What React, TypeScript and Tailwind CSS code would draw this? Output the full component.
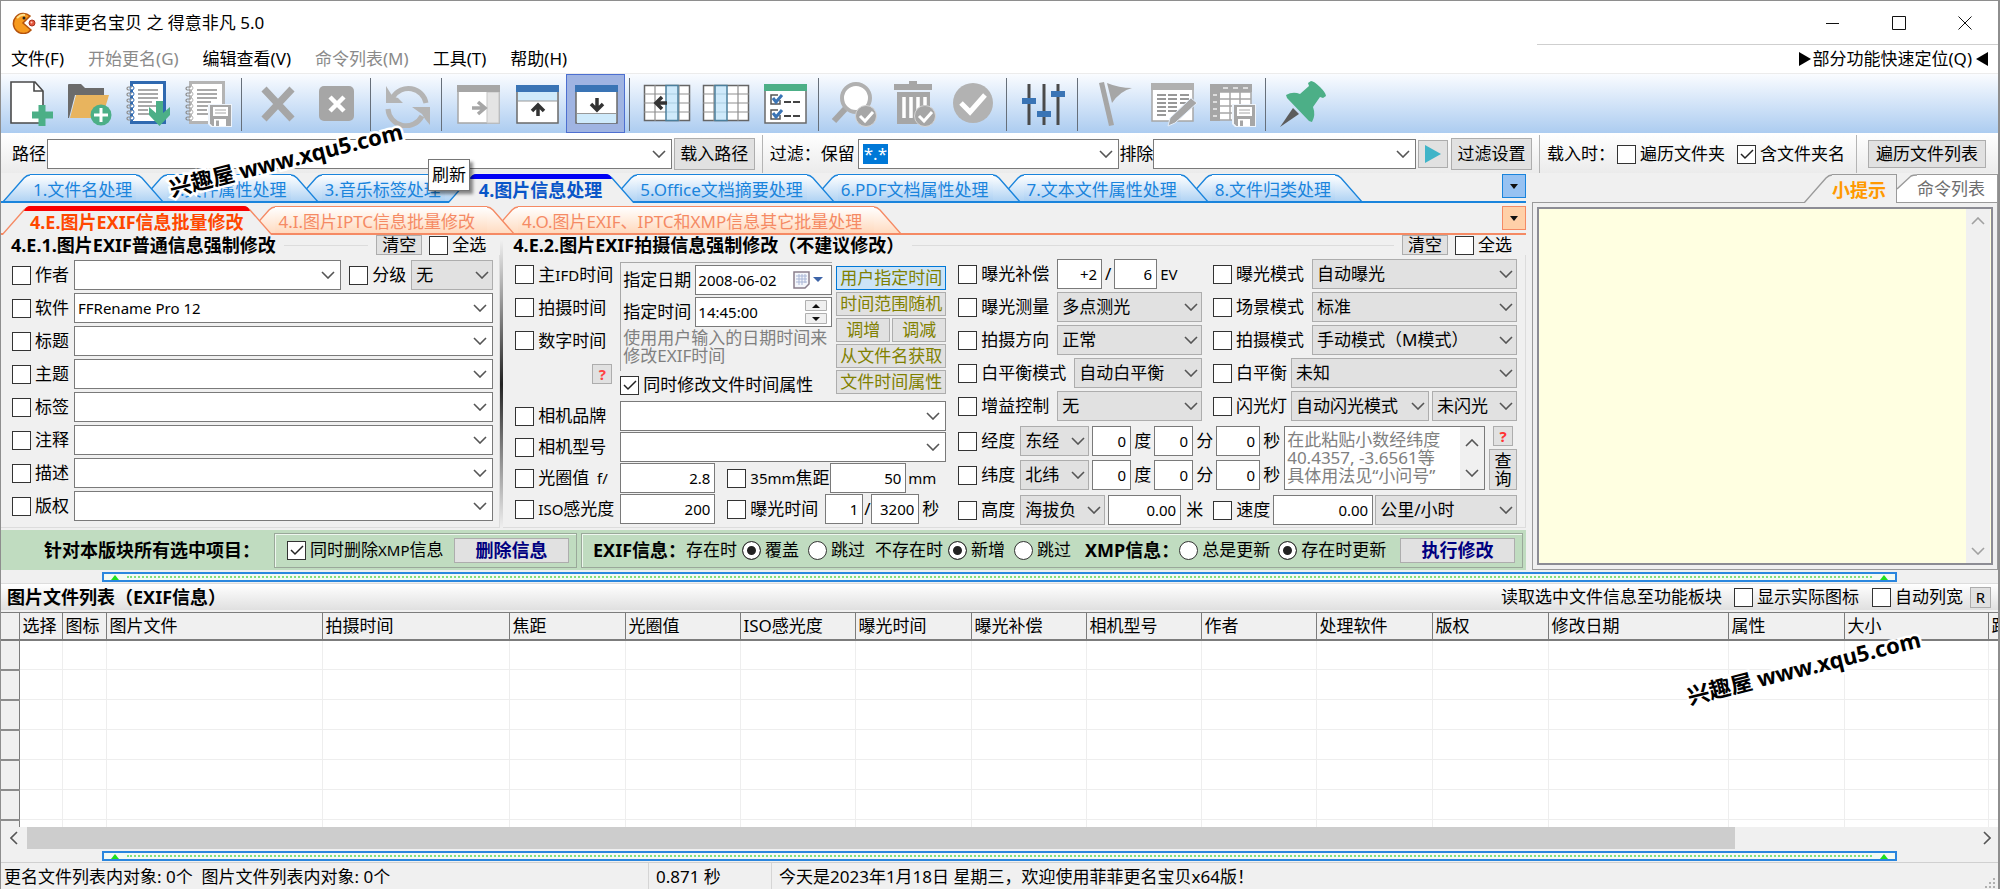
import { useId } from 'react';
import type { ReactNode } from 'react';
import clsx from 'clsx';

const GREEN = '#4caf87';
const GRAY = '#a6a6a6';
const DARK = '#4a4a4a';
const BLUE = '#3a74b5';

/* ---------- form controls ---------- */

function Chevron({ className }: { className?: string }) {
  return (
    <svg viewBox="0 0 14 8" className={clsx('pointer-events-none h-2 w-[14px] shrink-0', className)} fill="none" stroke="#555" strokeWidth="1.6">
      <path d="M1 1l6 6 6-6" />
    </svg>
  );
}

// Latin runs sit a little smaller than the Chinese text around them
function Mixed({ text }: { text: string }) {
  return (
    <span>
      {text.split(/([\x20-\x7e]+)/).map((part, i) => (i % 2 ? <span key={i} className="text-[15px]">{part}</span> : part))}
    </span>
  );
}

function Check({ label, checked, className }: { label: string; checked?: boolean; className?: string }) {
  return (
    <label className={clsx('flex shrink-0 items-center gap-1 whitespace-nowrap', className)}>
      <span className="grid shrink-0">
        <input
          type="checkbox"
          defaultChecked={checked}
          className="peer col-start-1 row-start-1 h-[19px] w-[19px] appearance-none border border-[#333] bg-white"
        />
        <svg viewBox="0 0 19 19" className="pointer-events-none col-start-1 row-start-1 hidden h-[19px] w-[19px] peer-checked:block" fill="none" stroke="#222" strokeWidth="1.5">
          <path d="M4 9l4 4 8-8" />
        </svg>
      </span>
      <Mixed text={label} />
    </label>
  );
}

function Radio({ name, label, checked, className }: { name: string; label: string; checked?: boolean; className?: string }) {
  return (
    <label className={clsx('flex shrink-0 items-center gap-1 whitespace-nowrap', className)}>
      <input
        type="radio"
        name={name}
        defaultChecked={checked}
        className="h-[19px] w-[19px] appearance-none rounded-full border border-[#333] bg-white checked:bg-[#222] checked:shadow-[inset_0_0_0_4px_#fff]"
      />
      {label}
    </label>
  );
}

function Select({ name, value, className }: { name: string; value: string; className?: string }) {
  return (
    <span className={clsx('grid h-[30px] min-w-0 items-center', className)}>
      <select aria-label={name} className="col-start-1 row-start-1 h-full w-full min-w-0 appearance-none border border-[#adadad] bg-[#e1e1e1] pl-1">
        <option>{value}</option>
      </select>
      <Chevron className="col-start-1 row-start-1 mr-1 justify-self-end" />
    </span>
  );
}

function Combo({ name, value, className, children }: { name: string; value?: string; className?: string; children?: ReactNode }) {
  return (
    <span className={clsx('flex h-[30px] min-w-0 items-center border border-[#7a7a7a] bg-white', className)}>
      {children}
      <input aria-label={name} defaultValue={value} className="h-full w-0 min-w-0 flex-1 px-[3px] text-[15px] outline-none" />
      <button type="button" aria-label={`${name} ▾`} className="flex h-full w-6 shrink-0 items-center justify-center">
        <Chevron />
      </button>
    </span>
  );
}

function Num({ name, value, className }: { name: string; value: string; className?: string }) {
  return (
    <input
      aria-label={name}
      defaultValue={value}
      className={clsx('h-[30px] shrink-0 border border-[#7a7a7a] bg-white px-1 text-right text-[15px]', className)}
    />
  );
}

function Btn({ children, className }: { children: ReactNode; className?: string }) {
  return (
    <button type="button" className={clsx('shrink-0 border border-[#adadad] bg-[#e1e1e1] text-center whitespace-nowrap', className)}>
      {children}
    </button>
  );
}

/* ---------- tab strips ---------- */

type Tone = 'blue' | 'orange' | 'plain';

const tones = {
  blue: {
    line: '#1a84dc',
    to: '#abd0f3',
    border: 'border-[#1a84dc]',
    fill: 'bg-linear-to-b from-white to-[#abd0f3]',
    text: 'text-[#1a84dc]',
    activeText: 'text-[#0a56c8]',
    bar: 'bg-[#0000f5]',
    pad: 'pl-[3px] pr-1',
    activePad: 'pl-[3px] pr-1',
  },
  orange: {
    line: '#f58a64',
    to: '#ffd9bd',
    border: 'border-[#f58a64]',
    fill: 'bg-linear-to-b from-white to-[#ffd9bd]',
    text: 'text-[#f58a64]',
    activeText: 'text-[#ff4800]',
    bar: 'bg-[#fa0000]',
    pad: 'pl-1 pr-3',
    activePad: '',
  },
  plain: {
    line: '#9a9a9a',
    to: '#ffffff',
    border: 'border-[#9a9a9a]',
    fill: 'bg-white',
    text: 'text-[#6e6e6e]',
    activeText: 'text-[#ff9900]',
    bar: '',
    pad: '',
    activePad: '',
  },
};

function Slope({ tone, active, flip }: { tone: Tone; active: boolean; flip?: boolean }) {
  const id = useId();
  const t = tones[tone];
  return (
    <svg viewBox="0 0 28 29" className={clsx('h-[29px] w-7 shrink-0', flip && '-scale-x-100')} fill="none">
      <defs>
        <linearGradient id={id} x1="0" y1="0" x2="0" y2="1">
          <stop offset="0" stopColor="#fff" />
          <stop offset="1" stopColor={t.to} />
        </linearGradient>
      </defs>
      <path d="M0 29L22 4Q25 1 28 1V29Z" fill={active ? '#f0f0f0' : `url(#${id})`} />
      <path d="M0 29L22 4Q25 1 28 1" stroke={t.line} strokeWidth="1.4" />
      {active && tone !== 'plain' && <path d="M22 5Q24 0 28 0V5Z" fill={tone === 'blue' ? '#0000f5' : '#fa0000'} />}
      {!active && tone !== 'plain' && <path d="M0 28H28" stroke={t.line} strokeWidth="2" />}
    </svg>
  );
}

function TabStrip({ tone, tabs, active }: { tone: Tone; tabs: string[]; active: number }) {
  const t = tones[tone];
  return (
    <div role="tablist" className={clsx('flex border-b-2 pt-px pl-px', t.border)}>
      {tabs.map((tab, i) => {
        const on = i === active;
        return (
          <button
            key={tab}
            type="button"
            role="tab"
            aria-selected={on}
            className={clsx('relative -mr-[25px] -mb-[2px] flex h-[29px] whitespace-nowrap', on ? t.activeText : t.text)}
            style={{ zIndex: on ? 20 : 10 - i }}
          >
            <Slope tone={tone} active={on} />
            <span className={clsx('flex h-full flex-col', on ? 'bg-[#f0f0f0] text-[18px] font-bold' : clsx('border-t border-b-2', t.border, t.fill))}>
              {on && <span className={clsx('h-[5px] shrink-0', t.bar)} />}
              <span className={clsx('leading-5', on ? clsx('pt-px', t.activePad) : clsx('pt-[5px]', t.pad))}>{tab}</span>
            </span>
            <Slope tone={tone} active={on} flip />
          </button>
        );
      })}
      <button
        type="button"
        aria-label="更多标签"
        className={clsx('ml-auto flex h-6 w-6 shrink-0 items-center justify-center border', t.border, tone === 'blue' ? 'bg-[#97c2f2]' : 'bg-[#ffd0a8]')}
      >
        <svg viewBox="0 0 8 5" className="h-[5px] w-2">
          <path d="M0 0h8L4 5z" fill="#111" />
        </svg>
      </button>
    </div>
  );
}

function Splitter() {
  return (
    <div className="mx-[101px] flex h-[10px] items-center gap-2 border-2 border-[#2a86de] bg-[#f3faf3] px-[7px]">
      <svg viewBox="0 0 8 5" className="h-[5px] w-2 shrink-0">
        <path d="M0 5h8L4 0z" fill="#1ee01e" />
      </svg>
      <span className="flex-1 border-t-2 border-dotted border-[#7fe07f]" />
      <svg viewBox="0 0 8 5" className="h-[5px] w-2 shrink-0">
        <path d="M0 5h8L4 0z" fill="#1ee01e" />
      </svg>
    </div>
  );
}

/* ---------- toolbar icons, all on a 48px grid ---------- */

const floppy = (
  <g>
    <path d="M24 24h24v23H27l-3-3z" fill="#eef4fb" />
    <path d="M26 25h21v21H28.500l-2.500-2.500z" fill={GRAY} />
    <path d="M29 27h15v9H29z" fill="#fff" />
    <path d="M31 30h11M31 33h11" stroke={GRAY} strokeWidth="1" />
    <path d="M30 39h12v7H30z" fill="#fff" />
    <path d="M32 40.500h3V46h-3z" fill={GRAY} />
  </g>
);

const badge = (
  <g>
    <circle cx="35" cy="36" r="10.500" fill={GRAY} stroke="#d4d4d4" strokeWidth="1" />
    <path d="M29 36l5 5 8-9" fill="none" stroke="#fff" strokeWidth="3" />
  </g>
);

function notebook(line: string) {
  return (
    <g>
      <rect x="6.500" y="2.500" width="33" height="40" fill="#fff" stroke={line} strokeWidth="3" />
      {[7, 13, 19, 25, 31, 37].map((y) => (
        <g key={y}>
          <circle cx="7" cy={y + 1} r="2" fill="#fff" stroke={line} strokeWidth="1" />
          <path d={`M7 ${y}H3.500a1.500 1.500 0 0 0 0 3H6`} fill="none" stroke="#8a8a8a" strokeWidth="1.200" />
        </g>
      ))}
      <path d="M13 10h20M13 14h20M13 18h20M13 22h14M13 26h18M13 30h10M13 34h14" stroke="#8d8d8d" strokeWidth="1.500" />
    </g>
  );
}

function grid(col: number) {
  return (
    <g fill="none">
      <rect x="1.500" y="5.500" width="45" height="35" fill="#fff" stroke="#666" strokeWidth="1.500" />
      <path d="M1 14h46M1 23h46M1 32h46M12 5v36M24 5v36M36 5v36" stroke="#8f8f8f" strokeWidth="1.200" />
      <rect x={col} y="5.500" width="12" height="35" fill="#cfeafb" stroke="#4b7f9c" strokeWidth="1.500" />
      <path d={`M${col + 1} 14h10M${col + 1} 23h10M${col + 1} 32h10`} stroke="#aacde0" />
    </g>
  );
}

const icons: Record<string, ReactNode> = {
  添加文件: (
    <g fill="none">
      <path d="M4 2h24l8 9v32H4z" fill="#fff" stroke={DARK} strokeWidth="1.600" />
      <path d="M27 2v9h9" stroke={DARK} strokeWidth="1.600" />
      <path d="M35 25v21M25 35h21" stroke={GREEN} strokeWidth="7" />
    </g>
  ),
  添加文件夹: (
    <g>
      <path d="M2 5q0-1 1-1h12l4 4h19v7H9L3 38H2z" fill="#6b6b6b" />
      <path d="M10 15h33l-7 23H4z" fill="#e8b45e" />
      <circle cx="35" cy="35" r="10.500" fill={GREEN} />
      <path d="M35 28v14M28 35h14" stroke="#fff" strokeWidth="3" />
    </g>
  ),
  导入列表: (
    <g>
      {notebook('#2f69b0')}
      <path d="M31 21h7v12l7-6v8L34.500 46 24 35v-8l7 6z" fill={GREEN} />
    </g>
  ),
  保存列表: (
    <g>
      {notebook('#b4b4b4')}
      {floppy}
    </g>
  ),
  移除: <path d="M10 9l28 30M38 9L10 39" stroke={GRAY} strokeWidth="7" />,
  清空列表: (
    <g>
      <rect x="6" y="6" width="35" height="35" rx="5" fill={GRAY} />
      <path d="M17 17l14 14M31 17L17 31" stroke="#fff" strokeWidth="4.500" />
    </g>
  ),
  刷新: (
    <g fill="none" stroke="#b4b4b4" strokeWidth="5">
      <path d="M9 17A18 18 0 0 1 42 23" />
      <path d="M4 29A18 18 0 0 0 38 36" />
      <path d="M2 6v17h17l-5-5-4-1-3-3z" fill="#b4b4b4" stroke="none" />
      <path d="M46 45V27H28l7 5 3 2 3 5z" fill="#b4b4b4" stroke="none" />
    </g>
  ),
  侧栏: (
    <g>
      <path d="M4 6h41v37H4z" fill="#fff" stroke={GRAY} strokeWidth="1.500" />
      <path d="M33 12h12v31H33z" fill="#e4e4e4" stroke="#c5c5c5" />
      <path d="M3 5h43v7H3z" fill={GRAY} />
      <path d="M18 28h12M24 22l7 6-7 6" fill="none" stroke={GRAY} strokeWidth="3.500" />
    </g>
  ),
  上栏: (
    <g>
      <path d="M4 6h41v37H4z" fill="#fff" stroke="#6a6a6a" strokeWidth="1.500" />
      <path d="M5 12h39v9H5z" fill="#cfeafb" />
      <path d="M5 21h39" stroke="#999" />
      <path d="M3 5h43v7H3z" fill={BLUE} />
      <path d="M25 36V25M19 31l6-6 6 6" fill="none" stroke="#333" strokeWidth="3.500" />
    </g>
  ),
  下栏: (
    <g>
      <path d="M4 6h41v37H4z" fill="#fff" stroke="#6a6a6a" strokeWidth="1.500" />
      <path d="M5 34h39v9H5z" fill="#cfeafb" />
      <path d="M5 33.500h39" stroke="#999" />
      <path d="M3 5h43v7H3z" fill={BLUE} />
      <path d="M25 18v11M19 24l6 6 6-6" fill="none" stroke="#333" strokeWidth="3.500" />
    </g>
  ),
  插入列: (
    <g>
      {grid(23)}
      <path d="M24 23H14M19 17l-6 6 6 6" fill="none" stroke="#333" strokeWidth="3.500" />
    </g>
  ),
  显示列: grid(13),
  选项: (
    <g fill="none">
      <path d="M4 5h41v38H4z" fill="#fff" stroke="#6a6a6a" strokeWidth="1.500" />
      <path d="M3 4h43v7H3z" fill={GREEN} />
      <path d="M17 15H10v9h9v-4M17 30H10v9h9v-4" stroke="#555" strokeWidth="1.500" />
      <path d="M12 18l3 4 6-7M12 33l3 4 6-7" stroke={BLUE} strokeWidth="3" />
      <path d="M23 22h7M32 22h7M23 36h7M32 36h7" stroke="#444" strokeWidth="2" />
    </g>
  ),
  预览: (
    <g>
      <path d="M15 28L3 41" stroke={GRAY} strokeWidth="6" />
      <circle cx="25" cy="18" r="14" fill="#fff" stroke="#b0b0b0" strokeWidth="4" />
      {badge}
    </g>
  ),
  删除选中: (
    <g>
      <path d="M4 4h15V1h8v3h15v6H4zM7 12h33v32H7z" fill={GRAY} />
      <path d="M14 17v21M21 17v21M28 17v21M35 17v8" stroke="#fff" strokeWidth="3.500" />
      {badge}
    </g>
  ),
  执行: (
    <g>
      <circle cx="24" cy="23" r="20" fill="#b2b2b2" />
      <path d="M12 23l9 9 15-17" fill="none" stroke="#fff" strokeWidth="5" />
    </g>
  ),
  设置: (
    <g stroke={DARK} strokeWidth="3">
      <path d="M9 4v41M24 4v41M38 4v41" />
      <path d="M2 21h14M17 34h14M31 14h14" stroke={BLUE} strokeWidth="6" />
    </g>
  ),
  标记: (
    <g fill={GRAY}>
      <path d="M9 3l5-1 10 43-5 1z" />
      <path d="M17 3q12 5 25 5-12 3-20 15z" />
    </g>
  ),
  编辑列表: (
    <g>
      <path d="M3 4h41v37H3z" fill="#fff" stroke={GRAY} strokeWidth="1.500" />
      <path d="M2 3h43v7H2z" fill="#b0b0b0" />
      <path d="M8 15h9M19 15h9M31 15h9M8 19h9M19 19h9M31 19h9M8 23h9M19 23h9M31 23h9M8 27h9M19 27h9M8 31h9M19 31h9M8 35h9" stroke="#777" strokeWidth="1.600" />
      <path d="M42 18l6 5-22 20-7 3 2-8z" fill={GRAY} stroke="#e4eefa" strokeWidth="1" />
    </g>
  ),
  导出表格: (
    <g>
      <path d="M3 5h40v35H3z" fill="#fff" stroke={GRAY} strokeWidth="1.500" />
      <path d="M2 4h42v8H12v29H2z" fill={GRAY} />
      <path d="M12 12h31M12 19h31M12 26h31M12 33h31M22 12v28M32 12v28" stroke={GRAY} strokeWidth="1.500" />
      <path d="M15 8h5M25 8h5M35 8h5M5 15h4M5 22h4M5 29h4M5 36h4" stroke="#ddd" strokeWidth="2" />
      {floppy}
    </g>
  ),
  置顶: (
    <g>
      <path d="M14 28l6 6L1 47z" fill="#5c5c5c" />
      <path d="M32 1q3 0 9 6t6 9l-3 2-3-1-7 10q3 8-1 15l-3-1L8 18l-1-3q7-4 14-1l9-8-1-3z" fill={GREEN} />
    </g>
  ),
};

const toolGroups = [
  ['添加文件', '添加文件夹', '导入列表', '保存列表'],
  ['移除', '清空列表'],
  ['刷新'],
  ['侧栏', '上栏', '下栏'],
  ['插入列', '显示列', '选项'],
  ['预览', '删除选中', '执行'],
  ['设置'],
  ['标记', '编辑列表', '导出表格'],
  ['置顶'],
];

const menus = [
  { text: '文件(F)' },
  { text: '开始更名(G)', off: true },
  { text: '编辑查看(V)' },
  { text: '命令列表(M)', off: true },
  { text: '工具(T)' },
  { text: '帮助(H)' },
];

const fileTabs = ['1.文件名处理', '2.文件属性处理', '3.音乐标签处理', '4.图片信息处理', '5.Office文档摘要处理', '6.PDF文档属性处理', '7.文本文件属性处理', '8.文件归类处理'];
const exifTabs = ['4.E.图片EXIF信息批量修改', '4.I.图片IPTC信息批量修改', '4.O.图片EXIF、IPTC和XMP信息其它批量处理'];

const columns: [string, number][] = [
  ['', 18],
  ['选择', 43],
  ['图标', 44],
  ['图片文件', 216],
  ['拍摄时间', 187],
  ['焦距', 116],
  ['光圈值', 115],
  ['ISO感光度', 115],
  ['曝光时间', 116],
  ['曝光补偿', 115],
  ['相机型号', 115],
  ['作者', 115],
  ['处理软件', 116],
  ['版权', 116],
  ['修改日期', 180],
  ['属性', 116],
  ['大小', 144],
  ['路径', 14],
];

/* ---------- page sections ---------- */

function TitleBar() {
  return (
    <header className="bg-white">
      <div className="flex h-[43px] items-center pl-[11px]">
        <svg viewBox="0 0 24 22" className="h-[22px] w-6 shrink-0">
          <path d="M18 4A10 10 0 1 0 19 18l-8-7z" fill="#f79a1e" stroke="#b5530c" strokeWidth="1.500" />
          <path d="M5 6q4-4 8-3" stroke="#ffe08a" strokeWidth="2" fill="none" />
          <circle cx="12" cy="6" r="1.500" fill="#222" />
          <circle cx="20" cy="11" r="3" fill="#e2553d" stroke="#a8321f" />
          <circle cx="19.500" cy="10.500" r="1" fill="#ffd0c0" />
        </svg>
        <h1 className="ml-1 flex-1">菲菲更名宝贝 之 得意非凡 5.0</h1>
        <div className="flex">
          <button type="button" aria-label="最小化" className="flex h-10 w-[66px] items-center justify-center">
            <svg viewBox="0 0 14 14" className="h-[14px] w-[14px]" stroke="#111" fill="none">
              <path d="M0 7.500h13" />
            </svg>
          </button>
          <button type="button" aria-label="最大化" className="flex h-10 w-[66px] items-center justify-center">
            <svg viewBox="0 0 14 14" className="h-[14px] w-[14px]" stroke="#111" fill="none">
              <path d="M.5.5h13v13H.5z" />
            </svg>
          </button>
          <button type="button" aria-label="关闭" className="flex h-10 w-[66px] items-center justify-center">
            <svg viewBox="0 0 14 14" className="h-[14px] w-[14px]" stroke="#111" fill="none">
              <path d="M.5.5l13 13M13.500.5l-13 13" />
            </svg>
          </button>
        </div>
      </div>
      <nav className="flex h-[29px] pl-[10px]">
        {menus.map((m) => (
          <button key={m.text} type="button" disabled={m.off} className="mr-6 disabled:text-[#8a8a8a]">
            {m.text}
          </button>
        ))}
        <div className="ml-auto flex w-[461px] justify-end border-t border-[#cfcfcf] pr-[10px]">
          <button type="button" className="flex items-center">
            <svg viewBox="0 0 12 14" className="mr-[2px] h-[14px] w-3">
              <path d="M0 0l12 7-12 7z" />
            </svg>
            部分功能快速定位(Q)
            <svg viewBox="0 0 12 14" className="ml-1 h-[14px] w-3">
              <path d="M12 0L0 7l12 7z" />
            </svg>
          </button>
        </div>
      </nav>
    </header>
  );
}

function Toolbar() {
  return (
    <div role="toolbar" className="flex h-[60px] border-t border-[#ececec] bg-linear-to-b from-[#fafcff] to-[#acccf0]">
      {toolGroups.map((group, i) => (
        <div key={group[0]} className="flex">
          {i > 0 && <span className={clsx('mt-1 ml-1 h-[53px] w-px bg-[#666f7a]', i % 2 ? 'mr-[6px]' : 'mr-[7px]')} />}
          {group.map((name) => (
            <button
              key={name}
              type="button"
              aria-label={name}
              className={clsx('flex h-[59px] w-[59px] items-center justify-center', name === '下栏' && 'border border-[#4d6fd0] bg-[#a0b4e2]')}
            >
              <svg viewBox="0 0 48 48" className="h-12 w-12 shrink-0">
                {icons[name]}
              </svg>
            </button>
          ))}
        </div>
      ))}
    </div>
  );
}

function PathBar() {
  return (
    <div className="flex h-10 items-center bg-linear-to-b from-white to-[#ebebeb] pt-[2px] pl-[11px] whitespace-nowrap">
      <span className="w-[35px]">路径</span>
      <Combo name="路径" className="flex-[626]" />
      <Btn className="ml-[2px] h-8 w-[81px]">载入路径</Btn>
      <span className="mx-[7px] h-full w-px bg-[#b4b4b4]" />
      <span className="w-[88px]">过滤：保留</span>
      <Combo name="保留" className="flex-[261]">
        <span className="ml-1 bg-[#0078d7] px-px text-white">*.*</span>
      </Combo>
      <span>排除</span>
      <Combo name="排除" className="flex-[262]" />
      <Btn className="ml-[2px] flex h-7 w-[30px] items-center justify-center">
        <svg viewBox="0 0 16 18" className="h-[18px] w-4" aria-label="应用过滤">
          <path d="M0 0l16 9-16 9z" fill="#3fb4c8" />
        </svg>
      </Btn>
      <Btn className="ml-[3px] h-8 w-[81px]">过滤设置</Btn>
      <span className="mx-[7px] h-full w-px bg-[#b4b4b4]" />
      <span className="w-[70px]">载入时：</span>
      <Check label="遍历文件夹" />
      <Check label="含文件夹名" checked className="ml-3" />
      <span className="mx-[11px] h-full w-px bg-[#b4b4b4]" />
      <Btn className="mr-[12px] h-7 w-[118px]">遍历文件列表</Btn>
    </div>
  );
}

function GroupHead({ title }: { title: string }) {
  return (
    <div className="flex h-5 items-center pr-[6px] pl-[10px] whitespace-nowrap">
      <h2 className="text-[18px] leading-5 font-bold">{title}</h2>
      <span className="mx-2 h-px flex-1 bg-[#dcdcdc]" />
      <Btn className="h-5 w-[46px] leading-[18px]">清空</Btn>
      <Check label="全选" className="ml-[7px] pr-2" />
    </div>
  );
}

function BasicInfo() {
  return (
    <section>
      <GroupHead title="4.E.1.图片EXIF普通信息强制修改" />
      <div className="grid gap-[3px] border-r border-b border-[#dcdcdc] pt-[5px] pr-[6px] pb-[6px] pl-[11px]">
        <div className="flex items-center">
          <Check label="作者" className="w-[62px]" />
          <Combo name="作者" className="flex-1" />
          <Check label="分级" className="mr-[5px] ml-2" />
          <Select name="分级" value="无" className="w-[82px]" />
        </div>
        {['软件', '标题', '主题', '标签', '注释', '描述', '版权'].map((label) => (
          <div key={label} className="flex items-center">
            <Check label={label} className="w-[62px]" />
            <Combo name={label} value={label === '软件' ? 'FFRename Pro 12' : ''} className="flex-1" />
          </div>
        ))}
      </div>
    </section>
  );
}

function TimeBlock() {
  return (
    <div className="flex h-[138px] pt-[3px]">
      <div className="flex w-[105px] shrink-0 flex-col gap-[14px] pt-[3px]">
        <Check label="主IFD时间" className="h-[19px]" />
        <Check label="拍摄时间" className="h-[19px]" />
        <Check label="数字时间" className="h-[19px]" />
        <Btn className="mr-2 h-5 w-5 self-end text-[15px] leading-[18px] font-bold text-[#f44]">?</Btn>
      </div>
      <div className="min-w-0 flex-1">
        <div className="h-[109px] border-t border-l border-[#a8a8a8] pt-[2px] pl-[2px]">
          <label className="flex items-center whitespace-nowrap">
            <span className="w-[72px] shrink-0">指定日期</span>
            <span className="flex h-[30px] flex-1 items-center border border-[#7a7a7a] bg-white">
              <input defaultValue="2008-06-02" className="w-0 flex-1 pl-[2px] text-[15px]" />
              <svg viewBox="0 0 30 20" className="mr-2 h-5 w-[30px]">
                <path d="M1 2h15v12l-4 4H1z" fill="#f4f6fb" stroke="#8a7f8c" strokeWidth="1.500" />
                <path d="M3 6h11M3 9h11M3 12h11M6 4v11M9 4v11M12 4v9" stroke="#a9b6d6" />
                <path d="M20 7h10l-5 5z" fill="#3d64a8" />
              </svg>
            </span>
          </label>
          <label className="mt-[2px] flex items-center whitespace-nowrap">
            <span className="w-[72px] shrink-0">指定时间</span>
            <span className="flex h-[30px] flex-1 items-center border border-[#7a7a7a] bg-white">
              <input defaultValue="14:45:00" className="w-0 flex-1 pl-[2px] text-[15px]" />
              <svg viewBox="0 0 22 24" className="mr-1 h-6 w-[22px]">
                <path d="M.5.5h21v10H.5zM.5 13.500h21v10H.5z" fill="#f0f0f0" stroke="#b0b0b0" />
                <path d="M7 8h8l-4-4zM7 17h8l-4 4z" fill="#111" />
              </svg>
            </span>
          </label>
          <p className="mt-[2px] leading-[18px] whitespace-nowrap text-[#808080]">
            使用用户输入的日期时间来
            <br />
            修改EXIF时间
          </p>
        </div>
        <Check label="同时修改文件时间属性" checked className="mt-[4px]" />
      </div>
      <div className="ml-1 grid w-[110px] shrink-0 grid-cols-2 content-start gap-[2px] pt-1 text-[#808000]">
        <Btn className="col-span-2 h-6 !border-[#0078d7] !bg-[#cce4f7] leading-[22px]">用户指定时间</Btn>
        <Btn className="col-span-2 h-6 leading-[22px]">时间范围随机</Btn>
        <Btn className="h-6 leading-[22px]">调增</Btn>
        <Btn className="h-6 leading-[22px]">调减</Btn>
        <Btn className="col-span-2 h-6 leading-[22px]">从文件名获取</Btn>
        <Btn className="col-span-2 h-6 leading-[22px]">文件时间属性</Btn>
      </div>
    </div>
  );
}

function Coordinate({ label, value }: { label: string; value: string }) {
  return (
    <div className="flex h-[30px] items-center whitespace-nowrap">
      <Check label={label} className="w-[62px]" />
      <Select name={label} value={value} className="mr-[3px] w-[69px]" />
      <Num name={`${label}度`} value="0" className="w-[39px]" />
      <span className="mx-[3px]">度</span>
      <Num name={`${label}分`} value="0" className="w-[39px]" />
      <span className="mx-[3px]">分</span>
      <Num name={`${label}秒`} value="0" className="w-[44px]" />
      <span className="mx-[3px]">秒</span>
    </div>
  );
}

function ShootingInfo() {
  return (
    <section>
      <GroupHead title="4.E.2.图片EXIF拍摄信息强制修改（不建议修改）" />
      <div className="grid grid-cols-[431fr_559fr] gap-3 border-r border-b border-[#dcdcdc] pt-1 pr-2 pb-[2px] pl-3">
        <div className="flex min-w-0 flex-col">
          <TimeBlock />
          <div className="mt-[4px] grid gap-px whitespace-nowrap">
            <div className="flex items-center">
              <Check label="相机品牌" className="w-[105px]" />
              <Combo name="相机品牌" className="flex-1" />
            </div>
            <div className="flex items-center">
              <Check label="相机型号" className="w-[105px]" />
              <Combo name="相机型号" className="flex-1" />
            </div>
            <div className="flex items-center">
              <Check label="光圈值  f/" className="w-[105px] whitespace-pre" />
              <Num name="光圈值" value="2.8" className="w-[95px]" />
              <Check label="35mm焦距" className="ml-3 w-[103px]" />
              <Num name="35mm焦距" value="50" className="w-[76px]" />
              <span className="ml-[2px] text-[15px]">mm</span>
            </div>
            <div className="flex items-center">
              <Check label="ISO感光度" className="w-[105px]" />
              <Num name="ISO感光度" value="200" className="w-[95px]" />
              <Check label="曝光时间" className="ml-3 w-[98px]" />
              <Num name="曝光时间分子" value="1" className="w-[38px]" />
              <span className="w-2 text-center">/</span>
              <Num name="曝光时间分母" value="3200" className="w-[48px]" />
              <span className="ml-[3px]">秒</span>
            </div>
          </div>
        </div>

        <div className="flex min-w-0 flex-col">
          <div className="grid grid-cols-[244fr_304fr] gap-x-[11px] whitespace-nowrap">
            <div className="grid min-w-0 gap-[3px]">
              <div className="flex items-center">
                <Check label="曝光补偿" className="w-[99px]" />
                <Num name="曝光补偿分子" value="+2" className="w-[45px]" />
                <span className="w-3 text-center">/</span>
                <Num name="曝光补偿分母" value="6" className="w-[43px]" />
                <span className="ml-[3px] text-[15px]">EV</span>
              </div>
              <div className="flex items-center">
                <Check label="曝光测量" className="w-[99px]" />
                <Select name="曝光测量" value="多点测光" className="flex-1" />
              </div>
              <div className="flex items-center">
                <Check label="拍摄方向" className="w-[99px]" />
                <Select name="拍摄方向" value="正常" className="flex-1" />
              </div>
              <div className="flex items-center">
                <Check label="白平衡模式" className="w-[116px]" />
                <Select name="白平衡模式" value="自动白平衡" className="flex-1" />
              </div>
              <div className="flex items-center">
                <Check label="增益控制" className="w-[99px]" />
                <Select name="增益控制" value="无" className="flex-1" />
              </div>
            </div>
            <div className="grid min-w-0 gap-[3px]">
              <div className="flex items-center">
                <Check label="曝光模式" className="w-[99px]" />
                <Select name="曝光模式" value="自动曝光" className="flex-1" />
              </div>
              <div className="flex items-center">
                <Check label="场景模式" className="w-[99px]" />
                <Select name="场景模式" value="标准" className="flex-1" />
              </div>
              <div className="flex items-center">
                <Check label="拍摄模式" className="w-[99px]" />
                <Select name="拍摄模式" value="手动模式（M模式）" className="flex-1" />
              </div>
              <div className="flex items-center">
                <Check label="白平衡" className="w-[78px]" />
                <Select name="白平衡" value="未知" className="flex-1" />
              </div>
              <div className="flex items-center">
                <Check label="闪光灯" className="w-[78px]" />
                <Select name="闪光灯" value="自动闪光模式" className="flex-1" />
                <Select name="闪光状态" value="未闪光" className="ml-[3px] w-[85px]" />
              </div>
            </div>
          </div>

          <div className="mt-[5px] flex">
            <div className="grid shrink-0 gap-[4px]">
              <Coordinate label="经度" value="东经" />
              <Coordinate label="纬度" value="北纬" />
            </div>
            <div className="ml-[1px] flex h-16 min-w-0 flex-1 border border-[#7a7a7a] bg-white">
              <textarea
                aria-label="经纬度"
                className="h-full w-0 flex-1 resize-none overflow-hidden pt-1 pl-[2px] leading-[18px] whitespace-pre text-[#808080] placeholder:text-[#808080]"
                placeholder={'在此粘贴小数经纬度\n40.4357, -3.6561等\n具体用法见“小问号”'}
              />
              <span className="flex w-6 flex-col items-center justify-between bg-[#f0f0f0] py-3">
                <Chevron className="rotate-180" />
                <Chevron />
              </span>
            </div>
            <div className="ml-1 flex w-[28px] shrink-0 flex-col items-center gap-[3px]">
              <Btn className="h-5 w-5 text-[15px] leading-[18px] font-bold text-[#f33]">?</Btn>
              <Btn className="h-[41px] w-full px-1 leading-[18px] !whitespace-normal">查询</Btn>
            </div>
          </div>

          <div className="mt-[5px] flex items-center whitespace-nowrap">
            <Check label="高度" className="w-[62px]" />
            <Select name="高度" value="海拔负" className="mr-[3px] w-[85px]" />
            <Num name="高度米" value="0.00" className="w-[73px]" />
            <span className="mx-[5px]">米</span>
            <Check label="速度" className="ml-[5px] w-[60px]" />
            <Num name="速度" value="0.00" className="w-[100px]" />
            <Select name="速度单位" value="公里/小时" className="ml-[2px] flex-1" />
          </div>
        </div>
      </div>
    </section>
  );
}

function ActionBar() {
  const box = 'flex h-[35px] items-center border border-[#9aa89a] shadow-[inset_1px_1px_0_#eef7ee]';
  return (
    <div className="mt-[2px] flex h-10 items-center bg-[#c0dcc0] pr-[3px] whitespace-nowrap">
      <span className="w-[273px] shrink-0 pl-[43px] text-[18px] font-bold">针对本版块所有选中项目：</span>
      <div className={clsx(box, 'w-[303px] shrink-0 pl-3')}>
        <Check label="同时删除XMP信息" checked />
        <Btn className="mr-[7px] ml-auto h-[25px] w-[115px] text-[18px] leading-[22px] font-bold text-[#000080]">删除信息</Btn>
      </div>
      <div className={clsx(box, 'ml-1 flex-1 pl-[11px]')}>
        <span className="text-[18px] font-bold">EXIF信息：</span>
        <span className="mr-[5px]">存在时</span>
        <Radio name="exist" label="覆盖" checked />
        <Radio name="exist" label="跳过" className="ml-[9px]" />
        <span className="mr-[5px] ml-[10px]">不存在时</span>
        <Radio name="missing" label="新增" checked />
        <Radio name="missing" label="跳过" className="ml-[9px]" />
        <span className="ml-[14px] text-[18px] font-bold">XMP信息：</span>
        <Radio name="xmp" label="总是更新" />
        <Radio name="xmp" label="存在时更新" checked className="ml-2" />
        <Btn className="mr-[7px] ml-auto h-[25px] w-[115px] text-[18px] leading-[22px] font-bold text-[#000080]">执行修改</Btn>
      </div>
    </div>
  );
}

function TipsPanel() {
  return (
    <aside className="ml-[6px] flex w-[466px] shrink-0 flex-col">
      <div role="tablist" className="flex h-[30px] justify-end pt-px">
        <span className="flex-1 border-b border-[#9a9a9a]" />
        <button type="button" role="tab" aria-selected="true" className="flex text-[18px] leading-[30px] font-bold text-[#ff9900]">
          <Slope tone="plain" active />
          <span className="h-full border-t border-r border-[#9a9a9a] pr-[10px]">小提示</span>
        </button>
        <button type="button" role="tab" aria-selected="false" className="flex border-b border-[#9a9a9a] leading-[28px] text-[#6e6e6e]">
          <svg viewBox="0 0 20 28" className="h-7 w-5" fill="none">
            <path d="M0 15L14 2Q16 1 20 1V28H0z" fill="#fff" />
            <path d="M0 15L14 2Q16 1 20 1" stroke="#9a9a9a" strokeWidth="1.400" />
          </svg>
          <span className="h-full border-t border-r border-[#9a9a9a] bg-white pr-3">命令列表</span>
        </button>
      </div>
      <div className="flex flex-1 border-x border-b border-[#9a9a9a] p-1">
        <div className="flex flex-1 border-2 border-[#8c8c94] bg-[#ffffe1]">
          <textarea aria-label="小提示" className="w-0 flex-1 resize-none outline-none" />
          <span className="mr-px flex w-6 flex-col items-center justify-between bg-[#f0f0f0] py-2">
            <Chevron className="rotate-180 opacity-50" />
            <Chevron className="opacity-50" />
          </span>
        </div>
      </div>
    </aside>
  );
}

function FileList() {
  return (
    <section>
      <div className="mt-px flex h-[27px] items-center border-t border-[#ddd] bg-linear-to-b from-white to-[#e0e0e0] pr-[7px] pl-[6px] whitespace-nowrap">
        <h2 className="flex-1 text-[18px] font-bold">图片文件列表（EXIF信息）</h2>
        <span>读取选中文件信息至功能板块</span>
        <Check label="显示实际图标" className="ml-3" />
        <Check label="自动列宽" className="ml-[13px]" />
        <Btn className="ml-[7px] h-[21px] w-[21px] text-[15px] leading-[19px]">R</Btn>
      </div>
      <div className="mt-[2px] h-[215px] overflow-hidden bg-white">
        <table className="w-full table-fixed border-collapse">
          <colgroup>
            {columns.map(([name, width]) => (
              <col key={name} style={{ width }} />
            ))}
          </colgroup>
          <thead>
            <tr className="h-[27px] border-t border-b-2 border-[#7c7c7c] bg-[#f0f0f0]">
              {columns.map(([name]) => (
                <th key={name} className="overflow-hidden border-r border-[#7c7c7c] p-0 pl-[3px] text-left leading-5 font-normal whitespace-nowrap last:border-r-0">
                  {name}
                </th>
              ))}
            </tr>
          </thead>
          <tbody>
            {[0, 1, 2, 3, 4, 5, 6].map((row) => (
              <tr key={row} className="h-[30px]">
                {columns.map(([name], i) => (
                  <td
                    key={name}
                    className={i === 0 ? 'border-r border-b-2 border-r-[#7c7c7c] border-b-[#8c8c8c] bg-[#f0f0f0]' : 'border-r border-b border-[#eeeeee]'}
                  />
                ))}
              </tr>
            ))}
          </tbody>
        </table>
      </div>
      <div className="flex h-[22px] items-center bg-[#f0f0f0]">
        <Chevron className="mx-[6px] rotate-90" />
        <span className="h-full flex-[1708] bg-[#cdcdcd]" />
        <span className="flex-[245]" />
        <Chevron className="mr-1 -rotate-90" />
      </div>
    </section>
  );
}

function StatusBar() {
  return (
    <footer className="mt-px flex h-7 items-center border-t border-[#d0d0d0] pl-[3px] whitespace-pre">
      <span className="w-[644px] shrink-0">更名文件列表内对象: 0个  图片文件列表内对象: 0个</span>
      <span className="flex h-full w-[123px] shrink-0 items-center border-l border-[#d5d5d5] pl-[7px]">0.871 秒</span>
      <span className="flex h-full flex-1 items-center border-l border-[#d5d5d5] pl-[7px]">今天是2023年1月18日 星期三，欢迎使用菲菲更名宝贝x64版！</span>
      <svg viewBox="0 0 12 12" className="mr-[2px] h-3 w-3 self-end" fill="#b0b0b0">
        <path d="M9 0h2v2H9zM9 4h2v2H9zM5 4h2v2H5zM9 8h2v2H9zM5 8h2v2H5zM1 8h2v2H1z" />
      </svg>
    </footer>
  );
}

function Watermark({ className }: { className: string }) {
  return (
    <div
      className={clsx(
        'pointer-events-none absolute z-40 -rotate-14 text-[22px] leading-7 font-bold whitespace-nowrap [paint-order:stroke_fill] [-webkit-text-stroke:5px_white]',
        className,
      )}
    >
      兴趣屋 www.xqu5.com
    </div>
  );
}

export default function App() {
  return (
    <div className="relative min-h-[889px] overflow-hidden border-t border-r-2 border-l border-[#8e8e8e] bg-[#f0f0f0] text-[17px] leading-5 text-black [font-family:'Noto_Sans','Noto_Sans_CJK_SC',sans-serif]">
      <TitleBar />
      <Toolbar />
      <PathBar />
      <main>
        <div className="flex">
          <div className="min-w-0 flex-1">
            <TabStrip tone="blue" tabs={fileTabs} active={3} />
            <div className="pt-[2px]">
              <TabStrip tone="orange" tabs={exifTabs} active={0} />
            </div>
            <div className="grid grid-cols-[499fr_3px_1022fr]">
              <BasicInfo />
              <span className="mt-[5px] bg-linear-to-b from-transparent via-[#222] to-transparent" />
              <ShootingInfo />
            </div>
            <ActionBar />
          </div>
          <TipsPanel />
        </div>
        <div className="pt-[2px]">
          <Splitter />
        </div>
        <FileList />
        <div className="pt-[2px]">
          <Splitter />
        </div>
      </main>
      <StatusBar />

      <div role="tooltip" className="absolute top-[158px] left-[427px] z-30 border border-[#767676] bg-white px-[3px] py-[5px] shadow-[3px_3px_3px_rgba(0,0,0,0.45)]">
        刷新
      </div>
      <Watermark className="top-[144px] left-[165px]" />
      <Watermark className="top-[652px] left-[1683px]" />
    </div>
  );
}
